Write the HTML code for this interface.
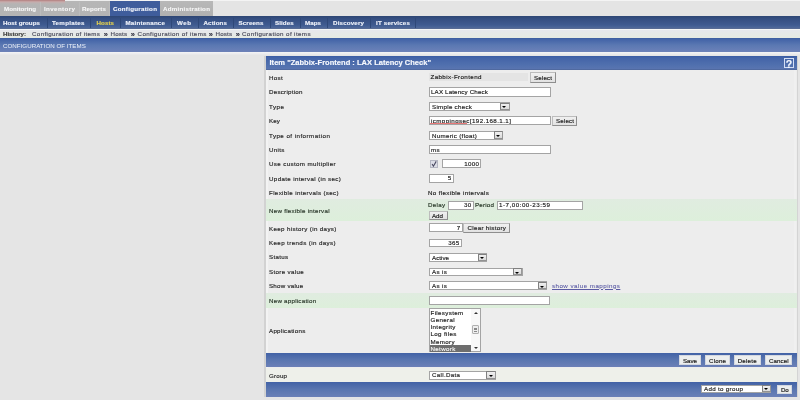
<!DOCTYPE html><html><head><meta charset="utf-8"><style>
html,body{margin:0;padding:0;}
body{width:800px;height:400px;overflow:hidden;position:relative;background:#e5e5e5;font-family:"Liberation Sans",sans-serif;}
.t{position:absolute;white-space:nowrap;line-height:1;-webkit-text-stroke:0.16px currentColor;}
</style></head><body>
<div id="w" style="position:absolute;left:0;top:0;width:800px;height:400px;filter:blur(0.55px);">
<div style="position:absolute;left:0px;top:0px;width:800px;height:16px;background:#e4e4e4;"></div>
<div style="position:absolute;left:65px;top:0px;width:735px;height:1.2px;background:#f4f4f4;"></div>
<div style="position:absolute;left:0px;top:0px;width:110px;height:16px;background:linear-gradient(#eeeeee 0px,#eeeeee 1px,#b6b6b6 1.5px,#b4b4b4 16px);"></div>
<div style="position:absolute;left:0px;top:0px;width:65px;height:16px;background:linear-gradient(#b07c7c 0px,#c09898 1px,#c8acac 2px,#bab2b2 3px,#b4b4b4 5px,#b4b4b4 16px);"></div>
<div style="position:absolute;left:110px;top:1px;width:49.5px;height:15px;background:#3f5d9c;"></div>
<div style="position:absolute;left:159.5px;top:1px;width:53.5px;height:15px;background:linear-gradient(#b8b8b8,#b0b0b0);"></div>
<div style="position:absolute;left:40px;top:2px;width:1px;height:14px;background:#bcbcbc;"></div>
<div style="position:absolute;left:78.5px;top:2px;width:1px;height:14px;background:#bcbcbc;"></div>
<div style="position:absolute;left:108.5px;top:2px;width:1px;height:14px;background:#bcbcbc;"></div>
<div class="t" style="left:4.00px;top:6.40px;font-size:6.2px;color:#f8f8f8;font-weight:bold;letter-spacing:-0.003px;-webkit-text-stroke:0.1px currentColor;">Monitoring</div>
<div class="t" style="left:44.00px;top:6.40px;font-size:6.2px;color:#f8f8f8;font-weight:bold;letter-spacing:0.387px;-webkit-text-stroke:0.1px currentColor;">Inventory</div>
<div class="t" style="left:82.00px;top:6.40px;font-size:6.2px;color:#f8f8f8;font-weight:bold;letter-spacing:0.094px;-webkit-text-stroke:0.1px currentColor;">Reports</div>
<div class="t" style="left:113.00px;top:6.40px;font-size:6.2px;color:#f8faff;font-weight:bold;letter-spacing:0.280px;-webkit-text-stroke:0.1px currentColor;">Configuration</div>
<div class="t" style="left:163.00px;top:6.40px;font-size:6.2px;color:#f8f8f8;font-weight:bold;letter-spacing:0.251px;-webkit-text-stroke:0.1px currentColor;">Administration</div>
<div style="position:absolute;left:0px;top:16px;width:800px;height:13px;background:linear-gradient(#2e4674 0px,#354f82 3px,#3f5b90 9px,#486498 11px,#5c6e94 13px);"></div>
<div class="t" style="left:3.00px;top:20.10px;font-size:6.2px;color:#eef2fa;font-weight:bold;letter-spacing:0.048px;">Host groups</div>
<div class="t" style="left:52.00px;top:20.10px;font-size:6.2px;color:#eef2fa;font-weight:bold;letter-spacing:0.288px;">Templates</div>
<div class="t" style="left:96.50px;top:20.10px;font-size:6.2px;color:#e2d050;font-weight:bold;letter-spacing:0.066px;">Hosts</div>
<div class="t" style="left:125.50px;top:20.10px;font-size:6.2px;color:#eef2fa;font-weight:bold;letter-spacing:0.196px;">Maintenance</div>
<div class="t" style="left:177.00px;top:20.10px;font-size:6.2px;color:#eef2fa;font-weight:bold;letter-spacing:0.505px;">Web</div>
<div class="t" style="left:203.50px;top:20.10px;font-size:6.2px;color:#eef2fa;font-weight:bold;letter-spacing:0.129px;">Actions</div>
<div class="t" style="left:238.50px;top:20.10px;font-size:6.2px;color:#eef2fa;font-weight:bold;letter-spacing:0.147px;">Screens</div>
<div class="t" style="left:275.00px;top:20.10px;font-size:6.2px;color:#eef2fa;font-weight:bold;letter-spacing:0.098px;">Slides</div>
<div class="t" style="left:305.00px;top:20.10px;font-size:6.2px;color:#eef2fa;font-weight:bold;letter-spacing:0.053px;">Maps</div>
<div class="t" style="left:333.00px;top:20.10px;font-size:6.2px;color:#eef2fa;font-weight:bold;letter-spacing:0.170px;">Discovery</div>
<div class="t" style="left:376.00px;top:20.10px;font-size:6.2px;color:#eef2fa;font-weight:bold;letter-spacing:0.195px;">IT services</div>
<div style="position:absolute;left:46.5px;top:18px;width:1px;height:9.5px;background:#2e4878;"></div>
<div style="position:absolute;left:90px;top:18px;width:1px;height:9.5px;background:#2e4878;"></div>
<div style="position:absolute;left:119.5px;top:18px;width:1px;height:9.5px;background:#2e4878;"></div>
<div style="position:absolute;left:171px;top:18px;width:1px;height:9.5px;background:#2e4878;"></div>
<div style="position:absolute;left:197.5px;top:18px;width:1px;height:9.5px;background:#2e4878;"></div>
<div style="position:absolute;left:233px;top:18px;width:1px;height:9.5px;background:#2e4878;"></div>
<div style="position:absolute;left:269.5px;top:18px;width:1px;height:9.5px;background:#2e4878;"></div>
<div style="position:absolute;left:299.5px;top:18px;width:1px;height:9.5px;background:#2e4878;"></div>
<div style="position:absolute;left:327px;top:18px;width:1px;height:9.5px;background:#2e4878;"></div>
<div style="position:absolute;left:370px;top:18px;width:1px;height:9.5px;background:#2e4878;"></div>
<div style="position:absolute;left:415px;top:18px;width:1px;height:9.5px;background:#2e4878;"></div>
<div style="position:absolute;left:0px;top:29px;width:800px;height:9px;background:linear-gradient(#e6e6ee,#e6eae2);"></div>
<div style="position:absolute;left:0px;top:29px;width:800px;height:1px;background:#f4f6f4;"></div>
<div class="t" style="left:3.00px;top:30.70px;font-size:6.2px;color:#404040;font-weight:bold;letter-spacing:-0.062px;">History:</div>
<div class="t" style="left:32.00px;top:30.70px;font-size:6.2px;color:#4a4a5c;font-weight:normal;letter-spacing:0.367px;">Configuration of items</div>
<div class="t" style="left:103.70px;top:30.50px;font-size:7.5px;color:#383848;font-weight:bold;letter-spacing:0.000px;">&raquo;</div>
<div class="t" style="left:110.50px;top:30.70px;font-size:6.2px;color:#4a4a5c;font-weight:normal;letter-spacing:0.165px;">Hosts</div>
<div class="t" style="left:130.70px;top:30.50px;font-size:7.5px;color:#383848;font-weight:bold;letter-spacing:0.000px;">&raquo;</div>
<div class="t" style="left:137.50px;top:30.70px;font-size:6.2px;color:#4a4a5c;font-weight:normal;letter-spacing:0.410px;">Configuration of items</div>
<div class="t" style="left:208.70px;top:30.50px;font-size:7.5px;color:#383848;font-weight:bold;letter-spacing:0.000px;">&raquo;</div>
<div class="t" style="left:215.50px;top:30.70px;font-size:6.2px;color:#4a4a5c;font-weight:normal;letter-spacing:0.165px;">Hosts</div>
<div class="t" style="left:235.70px;top:30.50px;font-size:7.5px;color:#383848;font-weight:bold;letter-spacing:0.000px;">&raquo;</div>
<div class="t" style="left:242.00px;top:30.70px;font-size:6.2px;color:#4a4a5c;font-weight:normal;letter-spacing:0.395px;">Configuration of items</div>
<div style="position:absolute;left:0px;top:38px;width:800px;height:14px;background:linear-gradient(#3c5ca0 0px,#4464a8 1.5px,#5a78b2 7px,#6a80b8 13px,#6e82b6 14px);"></div>
<div style="position:absolute;left:0px;top:52px;width:800px;height:2.5px;background:linear-gradient(#f4f4f6,#e6e6e8);"></div>
<div class="t" style="left:3.00px;top:42.75px;font-size:6.2px;color:#eef2fa;font-weight:normal;letter-spacing:0.021px;-webkit-text-stroke:0;">CONFIGURATION OF ITEMS</div>
<div style="position:absolute;left:264.2px;top:56px;width:1.6px;height:341px;background:#d2d2d2;"></div>
<div style="position:absolute;left:796.0px;top:56px;width:2px;height:341px;background:#d4d4d4;"></div>
<div style="position:absolute;left:266px;top:56px;width:530.5px;height:341px;background:#ededed;"></div>
<div style="position:absolute;left:794px;top:56px;width:2px;height:341px;background:#f0f0f0;"></div>
<div style="position:absolute;left:266px;top:56px;width:1.5px;height:341px;background:#f3f3f3;"></div>
<div style="position:absolute;left:266px;top:56px;width:530.5px;height:14px;background:linear-gradient(#3a5ca4 0px,#4464a8 2px,#5070ae 9px,#5874b0 12.5px,#4c6498 14px);"></div>
<div class="t" style="left:269.50px;top:58.90px;font-size:7.5px;color:#f6f8fd;font-weight:bold;letter-spacing:0.025px;">Item &quot;Zabbix-Frontend : LAX Latency Check&quot;</div>
<div style="position:absolute;left:784px;top:58px;width:9.8px;height:10.4px;box-sizing:border-box;border:1px solid #d4def4;"></div>
<div class="t" style="left:785.70px;top:58.70px;font-size:10.5px;color:#f4f8ff;font-weight:bold;letter-spacing:0.000px;">?</div>
<div style="position:absolute;left:266px;top:199px;width:530.5px;height:21.5px;background:linear-gradient(#e0ece0,#ddefdb);"></div>
<div style="position:absolute;left:266px;top:292.5px;width:530.5px;height:15.5px;background:linear-gradient(#e0ece0,#ddefdb);"></div>
<div class="t" style="left:269.00px;top:74.80px;font-size:6.2px;color:#262626;font-weight:normal;letter-spacing:0.353px;">Host</div>
<div class="t" style="left:269.00px;top:88.75px;font-size:6.2px;color:#262626;font-weight:normal;letter-spacing:0.250px;">Description</div>
<div class="t" style="left:269.00px;top:103.70px;font-size:6.2px;color:#262626;font-weight:normal;letter-spacing:0.515px;">Type</div>
<div class="t" style="left:269.00px;top:118.00px;font-size:6.2px;color:#262626;font-weight:normal;letter-spacing:0.053px;">Key</div>
<div class="t" style="left:269.00px;top:132.80px;font-size:6.2px;color:#262626;font-weight:normal;letter-spacing:0.459px;">Type of information</div>
<div class="t" style="left:269.00px;top:147.20px;font-size:6.2px;color:#262626;font-weight:normal;letter-spacing:0.291px;">Units</div>
<div class="t" style="left:269.00px;top:161.00px;font-size:6.2px;color:#262626;font-weight:normal;letter-spacing:0.371px;">Use custom multiplier</div>
<div class="t" style="left:269.00px;top:175.70px;font-size:6.2px;color:#262626;font-weight:normal;letter-spacing:0.358px;">Update interval (in sec)</div>
<div class="t" style="left:269.00px;top:189.80px;font-size:6.2px;color:#262626;font-weight:normal;letter-spacing:0.348px;">Flexible intervals (sec)</div>
<div class="t" style="left:269.00px;top:207.80px;font-size:6.2px;color:#2a382a;font-weight:normal;letter-spacing:0.278px;">New flexible interval</div>
<div class="t" style="left:269.00px;top:225.50px;font-size:6.2px;color:#262626;font-weight:normal;letter-spacing:0.359px;">Keep history (in days)</div>
<div class="t" style="left:269.00px;top:240.20px;font-size:6.2px;color:#262626;font-weight:normal;letter-spacing:0.388px;">Keep trends (in days)</div>
<div class="t" style="left:269.00px;top:254.20px;font-size:6.2px;color:#262626;font-weight:normal;letter-spacing:0.325px;">Status</div>
<div class="t" style="left:269.00px;top:269.20px;font-size:6.2px;color:#262626;font-weight:normal;letter-spacing:0.343px;">Store value</div>
<div class="t" style="left:269.00px;top:283.30px;font-size:6.2px;color:#262626;font-weight:normal;letter-spacing:0.238px;">Show value</div>
<div class="t" style="left:269.00px;top:297.70px;font-size:6.2px;color:#2a382a;font-weight:normal;letter-spacing:0.245px;">New application</div>
<div class="t" style="left:269.00px;top:327.50px;font-size:6.2px;color:#262626;font-weight:normal;letter-spacing:0.262px;">Applications</div>
<div style="position:absolute;left:429px;top:72.5px;width:99px;height:8.5px;background:#e4e4e4;"></div>
<div class="t" style="left:430.50px;top:74.10px;font-size:6.2px;color:#1c1c1c;font-weight:normal;letter-spacing:0.394px;">Zabbix-Frontend</div>
<div style="position:absolute;left:530px;top:72.3px;width:26px;height:10.299999999999997px;box-sizing:border-box;border:1px solid;border-color:#bcbcbc #8e8e8e #8e8e8e #bcbcbc;background:linear-gradient(#f0f0f0,#e2e2e2);"></div>
<div class="t" style="left:534.00px;top:75.00px;font-size:6.2px;color:#1c1c1c;font-weight:normal;letter-spacing:0.153px;">Select</div>
<div style="position:absolute;left:429px;top:87px;width:122px;height:9.5px;box-sizing:border-box;border:1px solid #a4a4a4;background:#fff;"></div>
<div class="t" style="left:431.00px;top:88.75px;font-size:6.2px;color:#1c1c1c;font-weight:normal;letter-spacing:0.156px;">LAX Latency Check</div>
<div style="position:absolute;left:429px;top:102px;width:81px;height:8.799999999999997px;box-sizing:border-box;border:1px solid #a4a4a4;background:#fff;"></div>
<div style="position:absolute;left:499.5px;top:102.5px;width:10px;height:7.799999999999997px;box-sizing:border-box;border:1px solid #808080;border-right-color:#989898;border-bottom-color:#929292;background:linear-gradient(#f0f0f0,#dadada);"></div>
<div style="position:absolute;left:502.30px;top:106.20px;width:0;height:0;border-left:2.2px solid transparent;border-right:2.2px solid transparent;border-top:2.8px solid #000;"></div>
<div class="t" style="left:432.00px;top:103.60px;font-size:6.2px;color:#1c1c1c;font-weight:normal;letter-spacing:0.283px;">Simple check</div>
<div style="position:absolute;left:429px;top:115.5px;width:121.5px;height:9.5px;box-sizing:border-box;border:1px solid #a4a4a4;background:#fff;"></div>
<div class="t" style="left:431.00px;top:118.00px;font-size:6.2px;color:#1c1c1c;font-weight:normal;letter-spacing:0.407px;">icmppingsec[192.168.1.1]</div>
<div style="position:absolute;left:430px;top:123.2px;width:37px;height:0.8px;background:#e87878;"></div>
<div style="position:absolute;left:552px;top:115.6px;width:25px;height:10.0px;box-sizing:border-box;border:1px solid;border-color:#bcbcbc #8e8e8e #8e8e8e #bcbcbc;background:linear-gradient(#f0f0f0,#e2e2e2);"></div>
<div class="t" style="left:556.00px;top:118.20px;font-size:6.2px;color:#1c1c1c;font-weight:normal;letter-spacing:0.153px;">Select</div>
<div style="position:absolute;left:429px;top:130.5px;width:74px;height:9.099999999999994px;box-sizing:border-box;border:1px solid #a4a4a4;background:#fff;"></div>
<div style="position:absolute;left:493.5px;top:131.0px;width:9px;height:8.099999999999994px;box-sizing:border-box;border:1px solid #808080;border-right-color:#989898;border-bottom-color:#929292;background:linear-gradient(#f0f0f0,#dadada);"></div>
<div style="position:absolute;left:495.80px;top:134.85px;width:0;height:0;border-left:2.2px solid transparent;border-right:2.2px solid transparent;border-top:2.8px solid #000;"></div>
<div class="t" style="left:432.00px;top:132.50px;font-size:6.2px;color:#1c1c1c;font-weight:normal;letter-spacing:0.311px;">Numeric (float)</div>
<div style="position:absolute;left:429px;top:145px;width:122px;height:9px;box-sizing:border-box;border:1px solid #a4a4a4;background:#fff;"></div>
<div class="t" style="left:431.00px;top:146.60px;font-size:6.2px;color:#1c1c1c;font-weight:normal;letter-spacing:0.350px;">ms</div>
<div style="position:absolute;left:430px;top:160px;width:8px;height:7.6px;box-sizing:border-box;border:1px solid #b4b6c2;background:#dcdde6;"></div>
<svg style="position:absolute;left:430px;top:160px" width="8" height="8" viewBox="0 0 8 8"><path d="M2.1 3.9 L3.4 6.2 L6.2 1.4" fill="none" stroke="#4a4a62" stroke-width="1.1"/></svg>
<div style="position:absolute;left:442px;top:159px;width:39px;height:9px;box-sizing:border-box;border:1px solid #a4a4a4;background:#fff;"></div>
<div class="t" style="right:320.65px;text-align:right;top:160.60px;font-size:6.2px;color:#1c1c1c;font-weight:normal;letter-spacing:0.350px;">1000</div>
<div style="position:absolute;left:429px;top:174px;width:24.5px;height:8.599999999999994px;box-sizing:border-box;border:1px solid #a4a4a4;background:#fff;"></div>
<div class="t" style="right:348.45px;text-align:right;top:175.30px;font-size:6.2px;color:#1c1c1c;font-weight:normal;letter-spacing:0.350px;">5</div>
<div class="t" style="left:428.00px;top:190.00px;font-size:6.2px;color:#1c1c1c;font-weight:normal;letter-spacing:0.362px;">No flexible intervals</div>
<div class="t" style="left:428.00px;top:202.30px;font-size:6.2px;color:#283828;font-weight:normal;letter-spacing:0.290px;">Delay</div>
<div style="position:absolute;left:448px;top:201px;width:25.5px;height:8.5px;box-sizing:border-box;border:1px solid #a4a4a4;background:#fff;"></div>
<div class="t" style="right:328.45px;text-align:right;top:202.30px;font-size:6.2px;color:#1c1c1c;font-weight:normal;letter-spacing:0.350px;">30</div>
<div class="t" style="left:475.00px;top:202.30px;font-size:6.2px;color:#283828;font-weight:normal;letter-spacing:0.216px;">Period</div>
<div style="position:absolute;left:497px;top:201px;width:85.60000000000002px;height:8.5px;box-sizing:border-box;border:1px solid #a4a4a4;background:#fff;"></div>
<div class="t" style="left:499.00px;top:202.30px;font-size:6.2px;color:#1c1c1c;font-weight:normal;letter-spacing:0.516px;">1-7,00:00-23:59</div>
<div style="position:absolute;left:428.5px;top:210.6px;width:19.100000000000023px;height:9.700000000000017px;box-sizing:border-box;border:1px solid;border-color:#bcbcbc #8e8e8e #8e8e8e #bcbcbc;background:linear-gradient(#f0f0f0,#e2e2e2);"></div>
<div class="t" style="left:432.00px;top:212.50px;font-size:6.2px;color:#1c1c1c;font-weight:normal;letter-spacing:-0.018px;">Add</div>
<div style="position:absolute;left:429px;top:223px;width:33.60000000000002px;height:9px;box-sizing:border-box;border:1px solid #a4a4a4;background:#fff;"></div>
<div class="t" style="right:339.35px;text-align:right;top:224.60px;font-size:6.2px;color:#1c1c1c;font-weight:normal;letter-spacing:0.350px;">7</div>
<div style="position:absolute;left:463px;top:223px;width:47px;height:9.699999999999989px;box-sizing:border-box;border:1px solid;border-color:#bcbcbc #8e8e8e #8e8e8e #bcbcbc;background:linear-gradient(#f0f0f0,#e2e2e2);"></div>
<div class="t" style="left:467.50px;top:224.80px;font-size:6.2px;color:#1c1c1c;font-weight:normal;letter-spacing:0.307px;">Clear history</div>
<div style="position:absolute;left:429px;top:238.5px;width:33px;height:8.5px;box-sizing:border-box;border:1px solid #a4a4a4;background:#fff;"></div>
<div class="t" style="right:340.35px;text-align:right;top:239.90px;font-size:6.2px;color:#1c1c1c;font-weight:normal;letter-spacing:0.350px;">365</div>
<div style="position:absolute;left:429px;top:253.4px;width:58px;height:8.200000000000017px;box-sizing:border-box;border:1px solid #a4a4a4;background:#fff;"></div>
<div style="position:absolute;left:477.5px;top:253.9px;width:9px;height:7.200000000000017px;box-sizing:border-box;border:1px solid #808080;border-right-color:#989898;border-bottom-color:#929292;background:linear-gradient(#f0f0f0,#dadada);"></div>
<div style="position:absolute;left:479.80px;top:257.30px;width:0;height:0;border-left:2.2px solid transparent;border-right:2.2px solid transparent;border-top:2.8px solid #000;"></div>
<div class="t" style="left:432.00px;top:254.50px;font-size:6.2px;color:#1c1c1c;font-weight:normal;letter-spacing:0.021px;">Active</div>
<div style="position:absolute;left:429px;top:267.7px;width:93.5px;height:8.300000000000011px;box-sizing:border-box;border:1px solid #a4a4a4;background:#fff;"></div>
<div style="position:absolute;left:513.0px;top:268.2px;width:9px;height:7.300000000000011px;box-sizing:border-box;border:1px solid #808080;border-right-color:#989898;border-bottom-color:#929292;background:linear-gradient(#f0f0f0,#dadada);"></div>
<div style="position:absolute;left:515.30px;top:271.65px;width:0;height:0;border-left:2.2px solid transparent;border-right:2.2px solid transparent;border-top:2.8px solid #000;"></div>
<div class="t" style="left:432.00px;top:268.90px;font-size:6.2px;color:#1c1c1c;font-weight:normal;letter-spacing:0.350px;">As is</div>
<div style="position:absolute;left:429px;top:281.4px;width:118px;height:8.600000000000023px;box-sizing:border-box;border:1px solid #a4a4a4;background:#fff;"></div>
<div style="position:absolute;left:537.5px;top:281.9px;width:9px;height:7.600000000000023px;box-sizing:border-box;border:1px solid #808080;border-right-color:#989898;border-bottom-color:#929292;background:linear-gradient(#f0f0f0,#dadada);"></div>
<div style="position:absolute;left:539.80px;top:285.50px;width:0;height:0;border-left:2.2px solid transparent;border-right:2.2px solid transparent;border-top:2.8px solid #000;"></div>
<div class="t" style="left:432.00px;top:282.70px;font-size:6.2px;color:#1c1c1c;font-weight:normal;letter-spacing:0.350px;">As is</div>
<div class="t" style="left:552.00px;top:282.70px;font-size:6.2px;color:#5a5aa4;font-weight:normal;letter-spacing:0.466px;text-decoration:underline;-webkit-text-stroke:0.08px currentColor;">show value mappings</div>
<div style="position:absolute;left:429px;top:296px;width:121px;height:8.5px;box-sizing:border-box;border:1px solid #a4a4a4;background:#fff;"></div>
<div style="position:absolute;left:429px;top:308.2px;width:51.5px;height:43.5px;box-sizing:border-box;border:1px solid #a4a4a4;background:#fff;"></div>
<div class="t" style="left:430.50px;top:310.20px;font-size:6.2px;color:#1c1c1c;font-weight:normal;letter-spacing:0.350px;">Filesystem</div>
<div class="t" style="left:430.50px;top:317.28px;font-size:6.2px;color:#1c1c1c;font-weight:normal;letter-spacing:0.350px;">General</div>
<div class="t" style="left:430.50px;top:324.36px;font-size:6.2px;color:#1c1c1c;font-weight:normal;letter-spacing:0.350px;">Integrity</div>
<div class="t" style="left:430.50px;top:331.44px;font-size:6.2px;color:#1c1c1c;font-weight:normal;letter-spacing:0.350px;">Log files</div>
<div class="t" style="left:430.50px;top:338.52px;font-size:6.2px;color:#1c1c1c;font-weight:normal;letter-spacing:0.350px;">Memory</div>
<div style="position:absolute;left:430px;top:345px;width:40.5px;height:6.5px;background:#6e6e6e;"></div>
<div class="t" style="left:430.50px;top:345.60px;font-size:6.2px;color:#f4f4f4;font-weight:normal;letter-spacing:0.350px;">Network</div>
<div style="position:absolute;left:471px;top:309px;width:8.5px;height:42px;background:#f8f8f8;"></div>
<div style="position:absolute;left:472px;top:325.3px;width:7px;height:8.5px;box-sizing:border-box;border:1px solid #b0b0b0;border-radius:1px;background:#eeeeee;"></div>
<div style="position:absolute;left:473.8px;top:327.6px;width:3.4px;height:0.7px;background:#888;"></div>
<div style="position:absolute;left:473.8px;top:329.1px;width:3.4px;height:0.7px;background:#888;"></div>
<div style="position:absolute;left:473.8px;top:330.6px;width:3.4px;height:0.7px;background:#888;"></div>
<div style="position:absolute;left:473.5px;top:312px;width:0;height:0;border-left:2px solid transparent;border-right:2px solid transparent;border-bottom:2px solid #333;"></div>
<div style="position:absolute;left:473.5px;top:346.5px;width:0;height:0;border-left:2px solid transparent;border-right:2px solid transparent;border-top:2px solid #333;"></div>
<div style="position:absolute;left:266px;top:352.5px;width:530.5px;height:0.8px;background:#f4f4f4;"></div>
<div style="position:absolute;left:266px;top:353.3px;width:530.5px;height:14.2px;background:linear-gradient(#4262a6,#5a76b0 50%,#6b80b7);"></div>
<div style="position:absolute;left:679px;top:355.4px;width:22px;height:9.600000000000023px;box-sizing:border-box;border:1px solid;border-color:#d4d8e0;background:#eceeee;"></div>
<div class="t" style="left:683.00px;top:358.10px;font-size:6.2px;color:#141414;font-weight:normal;letter-spacing:-0.045px;">Save</div>
<div style="position:absolute;left:705px;top:355.4px;width:25px;height:9.600000000000023px;box-sizing:border-box;border:1px solid;border-color:#d4d8e0;background:#eceeee;"></div>
<div class="t" style="left:709.00px;top:358.10px;font-size:6.2px;color:#141414;font-weight:normal;letter-spacing:0.197px;">Clone</div>
<div style="position:absolute;left:734px;top:355.4px;width:27px;height:9.600000000000023px;box-sizing:border-box;border:1px solid;border-color:#d4d8e0;background:#eceeee;"></div>
<div class="t" style="left:737.70px;top:358.10px;font-size:6.2px;color:#141414;font-weight:normal;letter-spacing:0.216px;">Delete</div>
<div style="position:absolute;left:765px;top:355.4px;width:27px;height:9.600000000000023px;box-sizing:border-box;border:1px solid;border-color:#d4d8e0;background:#eceeee;"></div>
<div class="t" style="left:769.00px;top:358.10px;font-size:6.2px;color:#141414;font-weight:normal;letter-spacing:0.057px;">Cancel</div>
<div style="position:absolute;left:266px;top:367.5px;width:530.5px;height:14.5px;background:#eef0ea;"></div>
<div class="t" style="left:269.00px;top:372.50px;font-size:6.2px;color:#2a2a2a;font-weight:normal;letter-spacing:0.191px;">Group</div>
<div style="position:absolute;left:429px;top:370.6px;width:67px;height:9.0px;box-sizing:border-box;border:1px solid #a4a4a4;background:#fff;"></div>
<div style="position:absolute;left:486.0px;top:371.1px;width:9.5px;height:8.0px;box-sizing:border-box;border:1px solid #808080;border-right-color:#989898;border-bottom-color:#929292;background:linear-gradient(#f0f0f0,#dadada);"></div>
<div style="position:absolute;left:488.55px;top:374.90px;width:0;height:0;border-left:2.2px solid transparent;border-right:2.2px solid transparent;border-top:2.8px solid #000;"></div>
<div class="t" style="left:432.00px;top:372.00px;font-size:6.2px;color:#1c1c1c;font-weight:normal;letter-spacing:0.311px;">Call.Data</div>
<div style="position:absolute;left:266px;top:382px;width:530.5px;height:14.5px;background:linear-gradient(#4262a6,#5a76b0 50%,#6b80b7);"></div>
<div style="position:absolute;left:701px;top:384.6px;width:70px;height:8.099999999999966px;box-sizing:border-box;border:1px solid #a4a4a4;background:#fff;"></div>
<div style="position:absolute;left:762.0px;top:385.1px;width:8.5px;height:7.099999999999966px;box-sizing:border-box;border:1px solid #808080;border-right-color:#989898;border-bottom-color:#929292;background:linear-gradient(#f0f0f0,#dadada);"></div>
<div style="position:absolute;left:764.05px;top:388.45px;width:0;height:0;border-left:2.2px solid transparent;border-right:2.2px solid transparent;border-top:2.8px solid #000;"></div>
<div class="t" style="left:704.00px;top:386.10px;font-size:6.2px;color:#1c1c1c;font-weight:normal;letter-spacing:0.319px;">Add to group</div>
<div style="position:absolute;left:777px;top:385.2px;width:15px;height:8.5px;box-sizing:border-box;border:1px solid;border-color:#d4d8e0;background:#eceeee;"></div>
<div class="t" style="left:781.00px;top:387.00px;font-size:6.2px;color:#141414;font-weight:normal;letter-spacing:-0.136px;">Do</div>
</div></body></html>
